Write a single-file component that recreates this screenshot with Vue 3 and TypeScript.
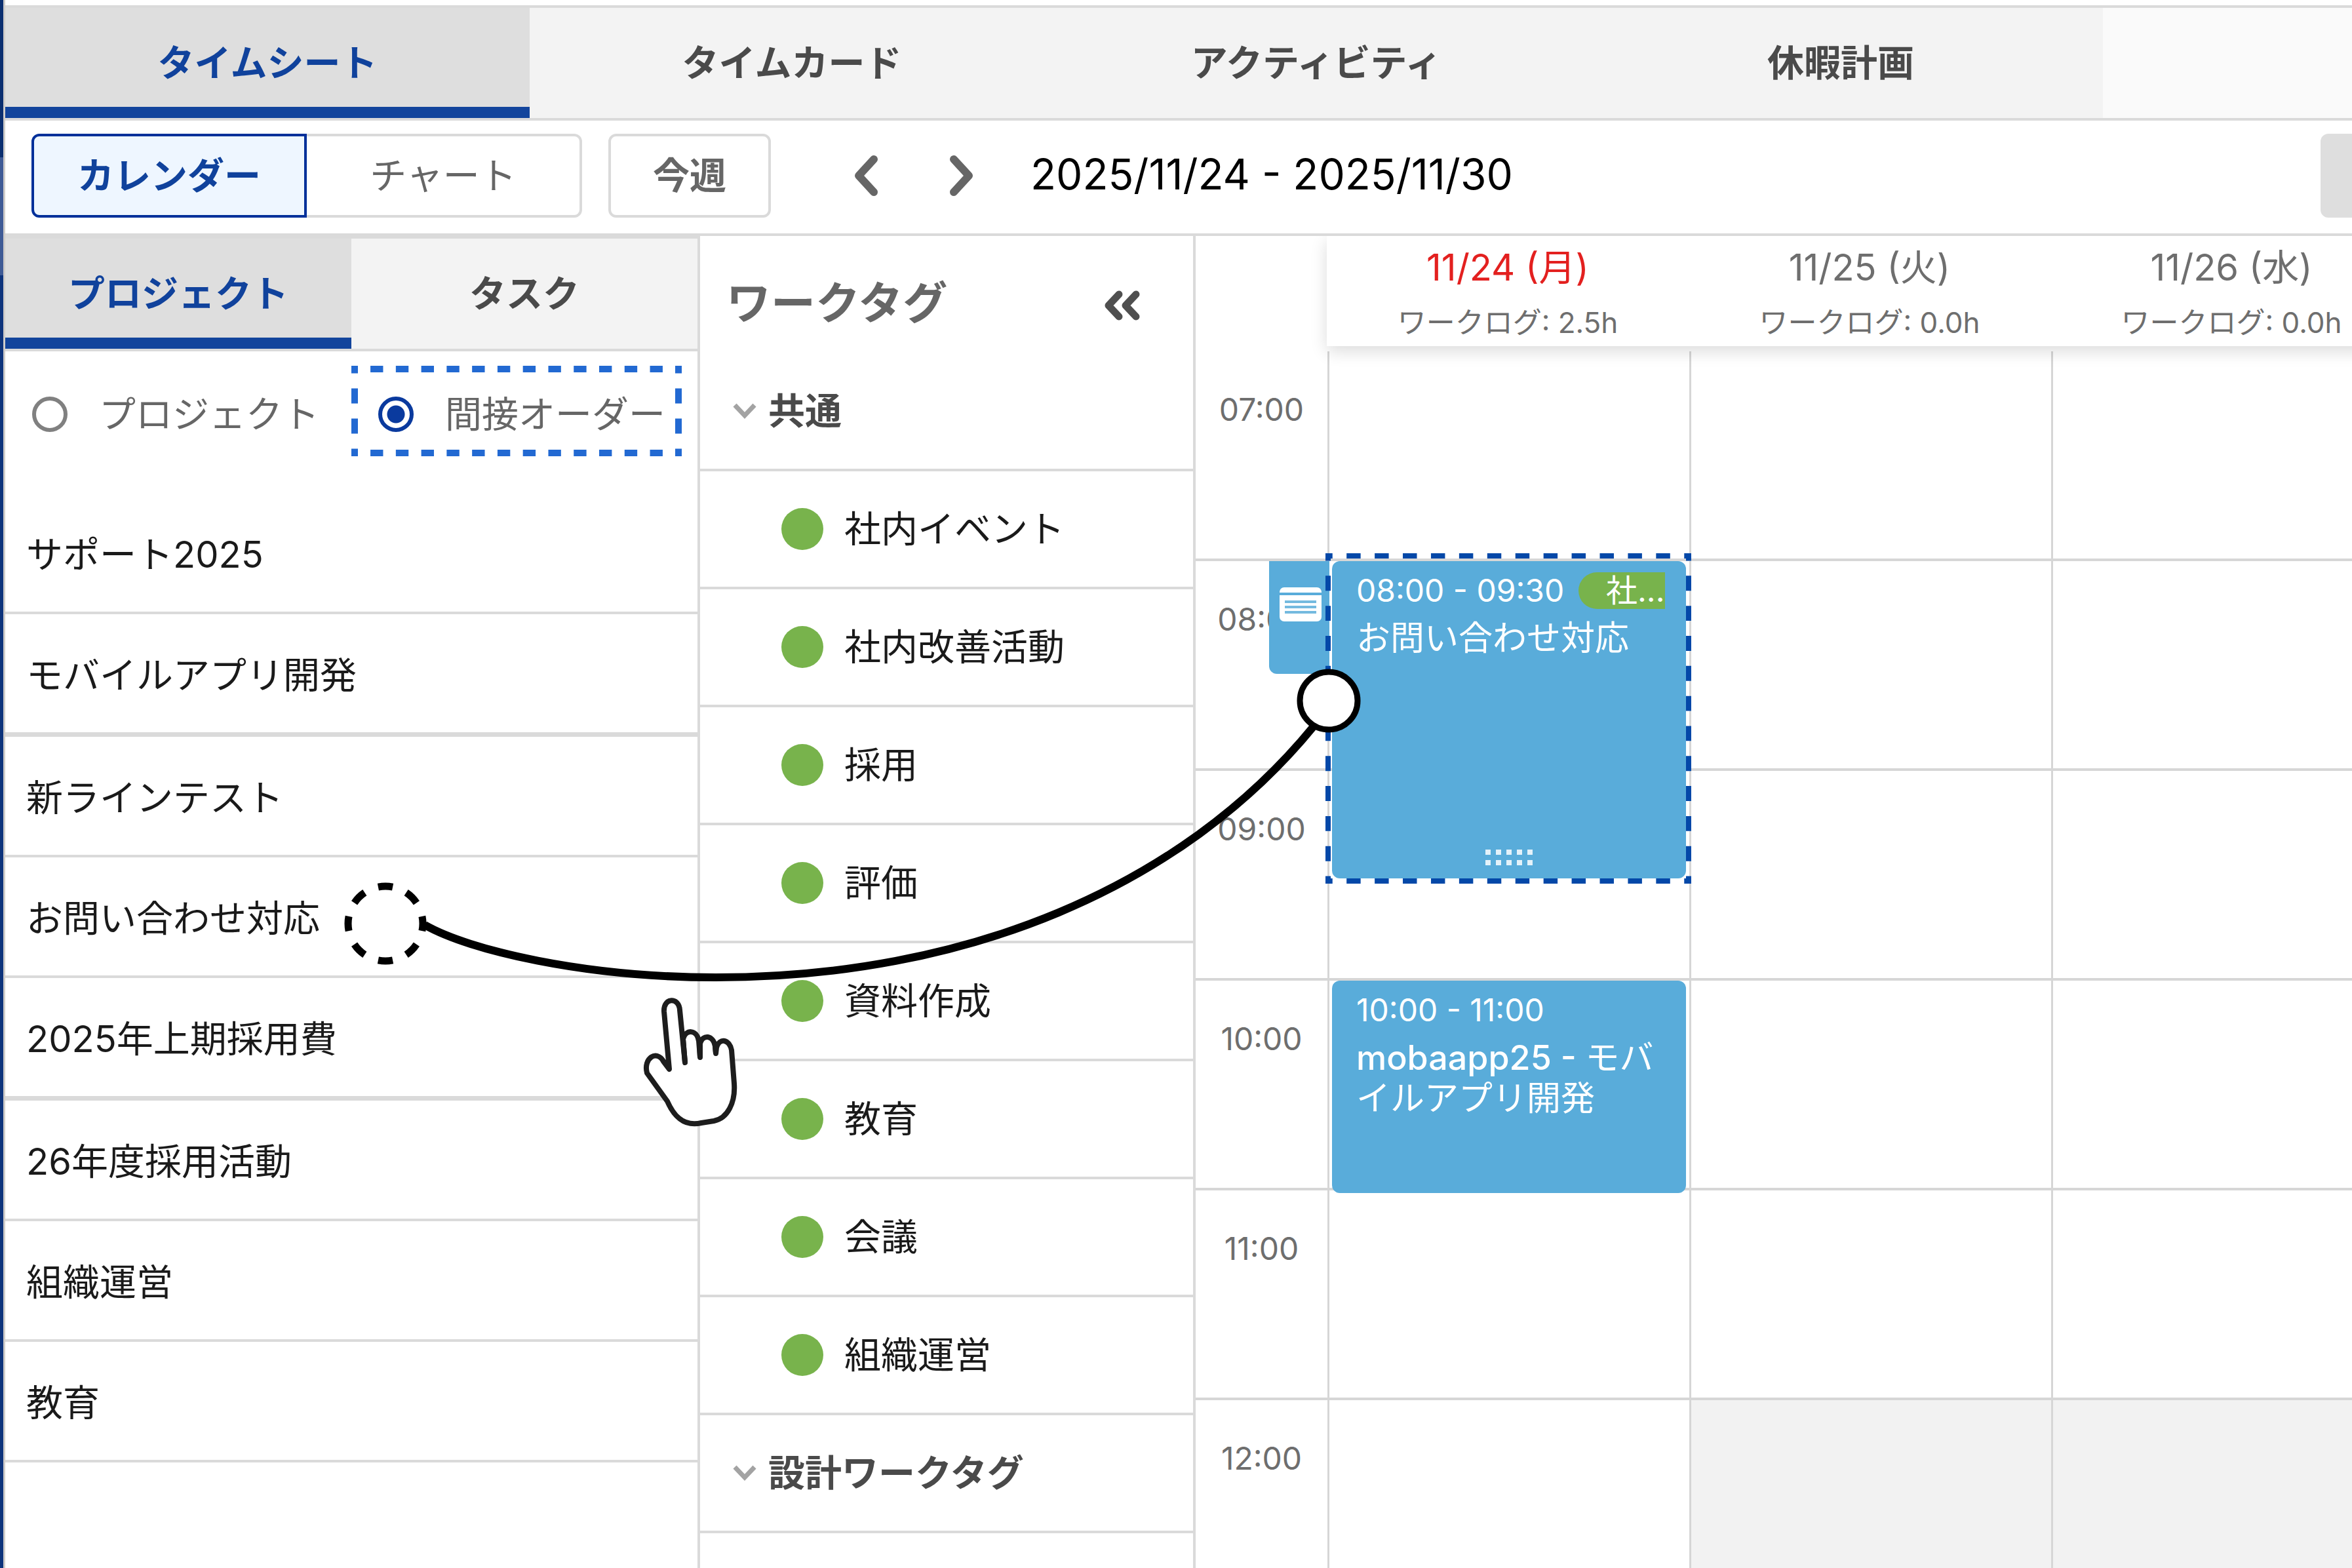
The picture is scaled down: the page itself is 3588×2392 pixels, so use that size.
<script setup lang="ts">
import { ref } from 'vue'

interface CalendarEvent {
  time: string
  title: string
  code?: string
  tag?: string
  startHour: number
  hours: number
  selected?: boolean
}

interface Day {
  date: string
  worklog: string
  holiday?: boolean
  closedFrom?: number
  events: CalendarEvent[]
}

const mainTabs = ['タイムシート', 'タイムカード', 'アクティビティ', '休暇計画']
const activeMain = ref(0)

const sideTabs = ['プロジェクト', 'タスク']
const activeSide = ref(0)

const orderKinds = ['プロジェクト', '間接オーダー']
const orderKind = ref('間接オーダー')

const view = ref('カレンダー')

const projects = [
  { name: 'サポート2025' },
  { name: 'モバイルアプリ開発', groupEnd: true },
  { name: '新ラインテスト' },
  { name: 'お問い合わせ対応' },
  { name: '2025年上期採用費', groupEnd: true },
  { name: '26年度採用活動' },
  { name: '組織運営' },
  { name: '教育' },
]

const tagGroups = [
  {
    name: '共通',
    tags: ['社内イベント', '社内改善活動', '採用', '評価', '資料作成', '教育', '会議', '組織運営'],
  },
  { name: '設計ワークタグ', tags: [] as string[] },
]

const firstHour = 7
const hours = ['07:00', '08:00', '09:00', '10:00', '11:00', '12:00']
const hourHeight = 320

const days: Day[] = [
  {
    date: '11/24 (月)',
    worklog: '2.5h',
    holiday: true,
    events: [
      { time: '08:00 - 09:30', title: 'お問い合わせ対応', tag: '社内イベント', startHour: 8, hours: 1.5, selected: true },
      { time: '10:00 - 11:00', code: 'mobaapp25 - ', title: 'モバイルアプリ開発', startHour: 10, hours: 1 },
    ],
  },
  { date: '11/25 (火)', worklog: '0.0h', closedFrom: 12, events: [] },
  { date: '11/26 (水)', worklog: '0.0h', closedFrom: 12, events: [] },
]

const eventBox = (e: CalendarEvent) => ({
  top: `${(e.startHour - firstHour) * hourHeight}px`,
  height: `${e.hours * hourHeight + 4}px`,
})
</script>

<template>
  <div class="app">
    <div class="rail"></div>
    <div class="page">
      <nav class="main-tabs">
        <button
          v-for="(t, i) in mainTabs"
          :key="t"
          type="button"
          class="tab"
          :class="{ active: i === activeMain }"
          @click="activeMain = i"
        >{{ t }}</button>
      </nav>

      <div class="toolbar">
        <div class="segmented">
          <button type="button" :class="{ on: view === 'カレンダー' }" @click="view = 'カレンダー'">カレンダー</button>
          <button type="button" :class="{ on: view === 'チャート' }" @click="view = 'チャート'">チャート</button>
        </div>
        <button type="button" class="this-week">今週</button>
        <button type="button" class="arrow" aria-label="前の週">
          <svg width="40" height="64" viewBox="0 0 40 64"><path d="M33 7 10 32 33 57" /></svg>
        </button>
        <button type="button" class="arrow next" aria-label="次の週">
          <svg width="40" height="64" viewBox="0 0 40 64"><path d="M7 7 30 32 7 57" /></svg>
        </button>
        <span class="range">2025/11/24 - 2025/11/30</span>
        <button type="button" class="more" aria-label="メニュー"></button>
      </div>

      <div class="body">
        <aside class="side">
          <nav class="side-tabs">
            <button
              v-for="(t, i) in sideTabs"
              :key="t"
              type="button"
              class="tab"
              :class="{ active: i === activeSide }"
              @click="activeSide = i"
            >{{ t }}</button>
          </nav>
          <div class="kinds">
            <label v-for="k in orderKinds" :key="k" class="kind">
              <input v-model="orderKind" type="radio" name="order-kind" :value="k" />
              <span>{{ k }}</span>
              <svg v-if="orderKind === k" class="mark mark-kind" viewBox="0 0 504 138" aria-hidden="true">
                <path d="M0 5H504M0 133H504" pathLength="104" />
                <path d="M5 0V138M499 0V138" pathLength="24" />
              </svg>
            </label>
          </div>
          <ul class="projects">
            <li v-for="p in projects" :key="p.name" :class="{ thick: p.groupEnd }">{{ p.name }}</li>
          </ul>
        </aside>

        <section class="tags">
          <header class="tags-head">
            <h2>ワークタグ</h2>
            <button type="button" class="collapse" aria-label="閉じる">
              <svg width="60" height="60" viewBox="0 0 60 60"><path d="M25 17 9 34 25 51M51 17 35 34 51 51" /></svg>
            </button>
          </header>
          <template v-for="g in tagGroups" :key="g.name">
            <button type="button" class="group">
              <svg width="40" height="28" viewBox="0 0 40 28"><path d="M5 5 20 21 35 5" /></svg>
              <span>{{ g.name }}</span>
            </button>
            <div v-for="t in g.tags" :key="t" class="tag-row">
              <i class="dot"></i>
              <span>{{ t }}</span>
            </div>
          </template>
        </section>

        <main class="calendar">
          <div class="day-heads">
            <div v-for="d in days" :key="d.date" class="day-head">
              <div class="date" :class="{ holiday: d.holiday }">{{ d.date }}</div>
              <div class="worklog">ワークログ: {{ d.worklog }}</div>
            </div>
          </div>
          <div class="grid">
            <div class="hours">
              <div v-for="h in hours" :key="h" class="hour"><span>{{ h }}</span></div>
            </div>
            <div v-for="d in days" :key="d.date" class="day">
              <div
                v-for="(h, i) in hours"
                :key="h"
                class="slot"
                :class="{ closed: d.closedFrom !== undefined && firstHour + i >= d.closedFrom }"
              ></div>
              <article v-for="e in d.events" :key="e.time" class="event" :style="eventBox(e)">
                <div class="event-top">
                  <span class="event-time">{{ e.time }}</span>
                  <span v-if="e.tag" class="event-tag">{{ e.tag.slice(0, 1) }}...</span>
                </div>
                <div class="event-title"><b v-if="e.code">{{ e.code }}</b>{{ e.title }}</div>
                <div v-if="e.selected" class="memo">
                  <svg width="64" height="52" viewBox="0 0 64 52">
                    <rect width="64" height="52" rx="7" fill="#fff" />
                    <path d="M0 10H64" stroke="#59acda" stroke-width="4" />
                    <path d="M8 22H56M8 30H56M8 38H56" stroke="#74badf" stroke-width="4" />
                  </svg>
                </div>
                <svg v-if="e.selected" class="grip" width="72" height="24" viewBox="0 0 72 24">
                  <path d="M0 4H72M0 20H72" stroke="#e4f2fa" stroke-width="8" stroke-dasharray="8 8" />
                </svg>
                <svg v-if="e.selected" class="mark mark-event" viewBox="0 0 558 504" aria-hidden="true">
                  <path d="M0 4H558M0 500H558" pathLength="104" />
                  <path d="M4 0V504M554 0V504" pathLength="88" />
                </svg>
              </article>
            </div>
          </div>
        </main>

        <svg class="drag" width="1440" height="740" viewBox="0 0 1440 740" aria-hidden="true">
          <g fill="none" stroke="#000">
            <path d="M96 391C164 430 340 471 540 471C920 471 1250 335 1452 88" stroke-width="12" />
            <circle cx="36" cy="389" r="57" stroke-width="11" pathLength="16" stroke-dasharray="1 1" stroke-dashoffset="0.5" />
            <circle cx="1475" cy="49" r="44" stroke-width="9" fill="#fff" />
          </g>
          <path
            class="hand"
            d="M469 611L461 523C460 501 484 501 485 521L493 601L490 565C494 550 511 550 514 568L516 593L516 572C520 557 536 559 539 576L540 587L541 578C546 562 561 566 564 582L568 633C570 662 558 686 537 690L518 693C488 700 474 678 466 660L435 617C429 594 450 581 460 599Z"
          />
          <path class="finger" d="M490 565L493 601M515 570L516 593M539 576L540 587" />
        </svg>
      </div>
    </div>
  </div>
</template>

<style>
body {
  background: #fff;
}
</style>

<style scoped>
* {
  box-sizing: border-box;
}
.app {
  display: flex;
  height: 100vh;
  overflow: hidden;
  font-family: Inter, 'Noto Sans CJK JP', sans-serif;
  font-size: 56px;
  line-height: 64px;
  color: #1a1a1a;
}
button {
  margin: 0;
  padding: 0;
  border: 0;
  background: none;
  font: inherit;
  color: inherit;
  cursor: pointer;
}
svg {
  display: block;
  fill: none;
}
.rail {
  flex: none;
  width: 8px;
  border-right: 3px solid #cfccc9;
  background: linear-gradient(#0b2f70 240px, #3f5b96 240px 420px, #0e347c 420px);
}
.page {
  flex: 1;
  min-width: 0;
  display: flex;
  flex-direction: column;
}
.tab {
  background: #f3f3f3;
  color: #4a4a4a;
  font-weight: 700;
  height: 168px;
}
.tab.active {
  background: #dedede;
  color: #10429c;
  box-shadow: inset 0 -17px #12449c;
}
.main-tabs {
  flex: none;
  display: flex;
  margin-top: 8px;
  border-top: 4px solid #dadada;
  border-bottom: 4px solid #dadada;
  background: #fafafa;
}
.main-tabs .tab {
  width: 800px;
}
.toolbar {
  flex: none;
  display: flex;
  align-items: center;
  padding: 20px 0 24px 40px;
  border-bottom: 4px solid #dadada;
}
.segmented {
  display: flex;
}
.segmented button,
.this-week {
  height: 128px;
  border: 4px solid #dadada;
  color: #666;
}
.segmented button {
  width: 420px;
}
.segmented button:first-child {
  border-radius: 12px 0 0 12px;
}
.segmented button:last-child {
  border-left: 0;
  border-radius: 0 12px 12px 0;
}
.segmented .on {
  border-color: #00309a;
  background: #eef6ff;
  color: #10429c;
  font-weight: 700;
}
.this-week {
  width: 248px;
  margin-left: 40px;
  border-radius: 12px;
  font-weight: 700;
}
.arrow {
  margin-left: 124px;
}
.arrow.next {
  margin-left: 108px;
}
.arrow path {
  stroke: #666;
  stroke-width: 12;
  stroke-linecap: round;
  stroke-linejoin: round;
}
.range {
  margin-left: 84px;
  padding-bottom: 4px;
  font-size: 64px;
  color: #000;
}
.more {
  width: 48px;
  height: 128px;
  margin-left: auto;
  border-radius: 12px 0 0 12px;
  background: #dedede;
}
.body {
  flex: 1;
  min-height: 0;
  position: relative;
  display: flex;
}
.side {
  flex: none;
  width: 1060px;
  border-right: 4px solid #dadada;
}
.side-tabs {
  display: flex;
  border-top: 4px solid #dadada;
  border-bottom: 4px solid #dadada;
}
.side-tabs .tab {
  flex: 1;
}
.kinds {
  display: flex;
  height: 192px;
  margin-bottom: 25px;
}
.kind {
  position: relative;
  flex: 1;
  display: flex;
  align-items: center;
  gap: 48px;
  padding-left: 41px;
  color: #666;
}
.kind input {
  appearance: none;
  flex: none;
  width: 54px;
  height: 54px;
  margin: 0;
  border: 6px solid #808080;
  border-radius: 50%;
}
.kind input:checked {
  border-color: #0a3a9e;
  background: radial-gradient(circle, #0a3a9e 13px, #fff 14px);
}
.mark {
  position: absolute;
  pointer-events: none;
}
.mark path {
  stroke-dasharray: 2 2;
  stroke-dashoffset: 1;
}
.mark-kind {
  left: 0;
  top: 22px;
  width: 504px;
}
.mark-kind path {
  stroke: #2269d2;
  stroke-width: 10;
}
.projects {
  margin: 0;
  padding: 0;
  list-style: none;
}
.projects li {
  padding: 61px 0 55px 32px;
  border-bottom: 4px solid #dadada;
}
.projects li.thick {
  border-bottom-width: 7px;
}
.tags {
  flex: none;
  width: 756px;
  border-right: 4px solid #dadada;
}
.tags-head {
  display: flex;
  align-items: center;
  justify-content: space-between;
  height: 179px;
  padding: 24px 78px 0 40px;
}
.tags-head h2 {
  margin: 0;
  font-size: 68px;
  font-weight: 700;
  color: #666;
}
.collapse path {
  stroke: #4f4f4f;
  stroke-width: 11;
  stroke-linecap: round;
  stroke-linejoin: round;
}
.group,
.tag-row {
  display: flex;
  align-items: center;
  width: 100%;
  height: 180px;
  border-bottom: 4px solid #dadada;
}
.group {
  gap: 16px;
  padding-left: 48px;
  font-weight: 700;
  color: #4a4a4a;
}
.group path {
  stroke: #a3a3a3;
  stroke-width: 7;
}
.tag-row {
  gap: 32px;
  padding-left: 124px;
}
.dot {
  width: 64px;
  height: 64px;
  border-radius: 50%;
  background: #78b34c;
}
.calendar {
  flex: 1;
  min-width: 0;
  overflow: hidden;
}
.day-heads {
  position: relative;
  z-index: 2;
  display: flex;
  width: 1660px;
  height: 168px;
  margin: 0 0 8px 200px;
  background: #fff;
  box-shadow: 0 8px 24px rgba(0, 0, 0, 0.14);
}
.day-head {
  flex: none;
  width: 552px;
  padding-top: 16px;
  text-align: center;
  white-space: nowrap;
  color: #6e6e6e;
}
.date.holiday {
  color: #e3201f;
}
.worklog {
  margin-top: 20px;
  font-size: 44px;
}
.grid {
  display: flex;
}
.hours {
  flex: none;
  width: 201px;
}
.hour {
  height: 320px;
  padding-top: 57px;
  border-bottom: 4px solid #d6d6d6;
  text-align: center;
  font-size: 48px;
  color: #6e6e6e;
}
.day {
  position: relative;
  flex: none;
  width: 552px;
  border-left: 3px solid #d6d6d6;
}
.slot {
  height: 320px;
  border-bottom: 4px solid #d6d6d6;
}
.slot.closed {
  background: #f2f2f2;
}
.event {
  position: absolute;
  z-index: 1;
  left: 4px;
  right: 5px;
  padding: 13px 32px 0 37px;
  border-radius: 12px;
  background: #59acda;
  color: #fff;
}
.event-top {
  display: flex;
  align-items: center;
  justify-content: space-between;
  height: 64px;
  font-size: 48px;
  white-space: nowrap;
}
.event-tag {
  width: 132px;
  height: 56px;
  padding-left: 42px;
  border-radius: 28px 0 0 28px;
  background: #78b34c;
  line-height: 56px;
}
.event-title {
  margin-top: 10px;
  font-size: 52px;
  line-height: 62px;
}
.event-title b {
  font-weight: 500;
}
.memo {
  position: absolute;
  top: 0;
  left: -96px;
  width: 92px;
  height: 172px;
  padding: 40px 0 0 16px;
  border-radius: 0 0 0 12px;
  background: #59acda;
}
.grip {
  position: absolute;
  left: 234px;
  bottom: 20px;
}
.mark-event {
  left: -10px;
  top: -12px;
  width: 558px;
}
.mark-event path {
  stroke: #0448a8;
  stroke-width: 8;
}
.drag {
  position: absolute;
  z-index: 3;
  left: 544px;
  top: 660px;
  overflow: visible;
  pointer-events: none;
}
.hand {
  fill: #fff;
}
.hand,
.finger {
  stroke: #1d1d1d;
  stroke-width: 8;
  stroke-linejoin: round;
}
</style>
